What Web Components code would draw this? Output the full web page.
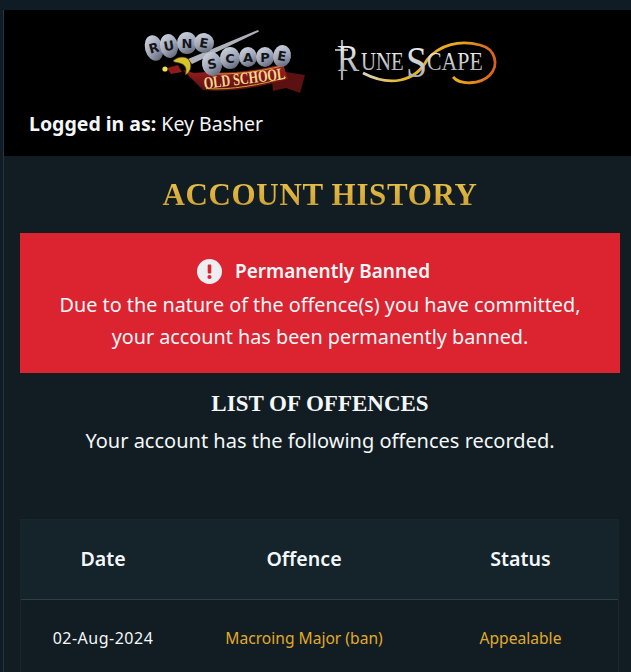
<!DOCTYPE html>
<html>
<head>
<meta charset="utf-8">
<title>Account History</title>
<style>
html, body { margin: 0; padding: 0; height: 100%; overflow: hidden; background: #121d23; }
body { font-family: "Noto Sans", sans-serif; color: #f4f7f9; }
</style>
</head>
<body>
<account-page>
  <site-header slot="header" user="Key Basher"></site-header>
  <section-title>ACCOUNT HISTORY</section-title>
  <ban-alert heading="Permanently Banned">Due to the nature of the offence(s) you have committed,<br>your account has been permanently banned.</ban-alert>
  <sub-title heading="LIST OF OFFENCES">Your account has the following offences recorded.</sub-title>
  <offence-table></offence-table>
</account-page>

<script>
class AccountPage extends HTMLElement {
  constructor() {
    super();
    this.attachShadow({mode: "open"}).innerHTML = `
      <style>
        :host { display: block; height: 672px; box-sizing: border-box; padding-top: 10px; background: #0f1c25; }
        .frame { margin-left: 3px; border-left: 1px solid #25343d; height: 662px; background: #121d23; overflow: hidden; }
        .content { padding: 0 11px 0 16px; }
      </style>
      <div class="frame">
        <slot name="header"></slot>
        <div class="content"><slot></slot></div>
      </div>`;
  }
}
customElements.define("account-page", AccountPage);

class OsrsLogo extends HTMLElement {
  constructor() {
    super();
    const stones = [
      ["R", 14, 23, 9, 13, -15], ["U", 29, 21, 9, 12, -10], ["N", 47, 18, 10, 11, 0], ["E", 64, 18, 10, 10, 10],
      ["S", 72, 39, 10, 12, -10], ["C", 90, 33, 10, 11, 0], ["A", 108, 32, 9, 10, 0], ["P", 125, 32, 9, 10, 0], ["E", 142, 31, 9, 11, 10]
    ];
    const rocks = stones.map(s => `
      <g transform="rotate(${s[5]} ${s[1]} ${s[2]})">
        <ellipse cx="${s[1]}" cy="${s[2]}" rx="${s[3]}" ry="${s[4]}" fill="url(#st)"/>
        <text x="${s[1]}" y="${s[2] + 4.5}">${s[0]}</text>
      </g>`).join("");
    this.attachShadow({mode: "open"}).innerHTML = `
      <style>:host { display: block; width: 170px; height: 70px; } svg { display: block; }</style>
      <svg width="170" height="70" viewBox="0 0 170 70">
        <defs>
          <linearGradient id="st" x1="0" y1="0" x2=".5" y2="1"><stop offset="0" stop-color="#d5dae6"/><stop offset=".6" stop-color="#a2a9ba"/><stop offset="1" stop-color="#6c7282"/></linearGradient>
          <linearGradient id="rb" x1="0" y1="0" x2="0" y2="1"><stop offset="0" stop-color="#a62022"/><stop offset="1" stop-color="#5d0f10"/></linearGradient>
        </defs>
        <path d="M146 47 L165 50 L160 68 L146 63 L133 66 L132 57Z" fill="#5b1012"/>
        <path d="M43 45 L54 48 L67 47 C92 49 120 45 143 39 L148 54 C122 62 88 68 63 65 Z" fill="url(#rb)"/>
        <path d="M67 48.5 C92 50.5 120 46.5 142 41" fill="none" stroke="#c9a33a" stroke-width="1"/>
        <path d="M66 63.5 C90 65.5 122 59.5 146 52.5" fill="none" stroke="#c9a33a" stroke-width="1"/>
        <path d="M48 34 L118 5 L119 6.5 L52 39Z" fill="#aeb2bb"/>
        <path d="M33 36 C38 31 46 31 49 35 C53 41 50 48 45 50 C47 45 46 41 42 39 C38 37 35 38 33 36Z" fill="#d9c22c" stroke="#4a3b08" stroke-width=".7"/>
        <path d="M27 43 L38 40 L42 47 L31 49Z" fill="#8f1a1c"/>
        <circle cx="25" cy="44" r="2.6" fill="#ece44a"/>
        <g font-family="'DejaVu Sans', sans-serif" font-size="13" font-weight="700" fill="#14161b" text-anchor="middle">${rocks}</g>
        <text transform="translate(105 59) rotate(-7) scale(.72 1)" font-family="'Liberation Serif', serif" font-weight="700" font-size="17" fill="#f2d98e" text-anchor="middle">OLD SCHOOL</text>
      </svg>`;
  }
}
customElements.define("osrs-logo", OsrsLogo);

class RsLogo extends HTMLElement {
  constructor() {
    super();
    this.attachShadow({mode: "open"}).innerHTML = `
      <style>:host { display: block; width: 175px; height: 60px; } svg { display: block; }</style>
      <svg width="175" height="60" viewBox="0 0 175 60">
        <defs>
          <linearGradient id="fl" gradientUnits="userSpaceOnUse" x1="30" y1="0" x2="170" y2="0">
            <stop offset="0" stop-color="#d8d8d0"/><stop offset=".3" stop-color="#e3b52a"/><stop offset=".7" stop-color="#ecaa1e"/><stop offset="1" stop-color="#d8561a"/>
          </linearGradient>
          <linearGradient id="mt" x1="0" y1="0" x2="0" y2="1"><stop offset="0" stop-color="#fff"/><stop offset="1" stop-color="#9a9ea2"/></linearGradient>
        </defs>
        <path d="M5 20 H18 M12 10 V50" stroke="#a3a6a8" stroke-width="2.2" fill="none"/>
        <path d="M33 43 C60 57 85 52 97 30 C110 14 130 10 150 15 C166 19 169 35 160 45 C150 55 130 55 123 47" fill="none" stroke="url(#fl)" stroke-width="2.8"/>
        <g font-family="'Liberation Serif', serif" fill="url(#mt)">
          <text transform="translate(7 41) scale(.9 1)" font-size="37">R</text>
          <text transform="translate(31 40) scale(.8 1)" font-size="26">UNE</text>
          <text transform="translate(76 47) scale(.86 1)" font-size="44">S</text>
          <text transform="translate(97 40) scale(.84 1)" font-size="26">CAPE</text>
        </g>
      </svg>`;
  }
}
customElements.define("rs-logo", RsLogo);

class SiteHeader extends HTMLElement {
  constructor() {
    super();
    this.attachShadow({mode: "open"});
  }
  connectedCallback() {
    this.shadowRoot.innerHTML = `
      <style>
        :host { display: block; background: #000; height: 146px; box-sizing: border-box; padding-top: 15px; }
        .logos { display: flex; justify-content: center; gap: 20px; height: 70px; padding-left: 10px; align-items: flex-start; }
        rs-logo { margin-top: 5px; }
        .user { margin: 15px 0 0 25px; font-size: 19.5px; line-height: 28px; color: #f4f7f9; }
        b { font-weight: 700; }
      </style>
      <div class="logos"><osrs-logo></osrs-logo><rs-logo></rs-logo></div>
      <div class="user"><b>Logged in as:</b> ${this.getAttribute("user")}</div>`;
  }
}
customElements.define("site-header", SiteHeader);

class SectionTitle extends HTMLElement {
  constructor() {
    super();
    this.attachShadow({mode: "open"}).innerHTML = `
      <style>
        :host { display: block; text-align: center; padding: 20px 0 19px; }
        h1 { margin: 0; font: 700 31px/38px "Liberation Serif", serif; letter-spacing: .65px;
             background: linear-gradient(#ecc64e, #c9982c); -webkit-background-clip: text; background-clip: text; color: transparent; }
      </style>
      <h1><slot></slot></h1>`;
  }
}
customElements.define("section-title", SectionTitle);

class BanAlert extends HTMLElement {
  constructor() {
    super();
    this.attachShadow({mode: "open"});
  }
  connectedCallback() {
    this.shadowRoot.innerHTML = `
      <style>
        :host { display: block; background: #dc2330; height: 140px; width: 600px; box-sizing: border-box; padding-top: 22px; text-align: center; color: #f4f7f9; font-size: 19.8px; line-height: 32px; }
        .head { display: flex; justify-content: center; align-items: center; gap: 13px; font-weight: 600; font-size: 19px; height: 32px; margin-bottom: 2px; padding-right: 13px; }
        svg { display: block; }
      </style>
      <div class="head">
        <svg width="25" height="25" viewBox="0 0 25 25"><circle cx="12.5" cy="12.5" r="12.5" fill="#eceef1"/><rect x="10.7" y="5.5" width="3.6" height="9" rx="1" fill="#dc2330"/><circle cx="12.5" cy="18" r="2.1" fill="#dc2330"/></svg>
        <span>${this.getAttribute("heading")}</span>
      </div>
      <div><slot></slot></div>`;
  }
}
customElements.define("ban-alert", BanAlert);

class SubTitle extends HTMLElement {
  constructor() {
    super();
    this.attachShadow({mode: "open"});
  }
  connectedCallback() {
    this.shadowRoot.innerHTML = `
      <style>
        :host { display: block; text-align: center; width: 600px; padding-top: 16px; }
        h2 { margin: 0; font: 700 23px/30px "Liberation Serif", serif; color: #f4f7f9; }
        p { margin: 9px 0 0; font-size: 20px; line-height: 26px; color: #f4f7f9; }
      </style>
      <h2>${this.getAttribute("heading")}</h2>
      <p><slot></slot></p>`;
  }
}
customElements.define("sub-title", SubTitle);

class OffenceTable extends HTMLElement {
  constructor() {
    super();
    this.attachShadow({mode: "open"}).innerHTML = `
      <style>
        :host { display: block; margin-top: 65px; width: 599px; border: solid #172730; border-width: 1px 1px 0; box-sizing: border-box; }
        .row { display: grid; grid-template-columns: 164px 238px 1fr; text-align: center; align-items: center; box-sizing: border-box; }
        .head { height: 80px; padding-bottom: 3px; background: #15242b; border-bottom: 1px solid #2c3e47; font-weight: 600; font-size: 19.6px; color: #f4f7f9; }
        .body { height: 78px; padding-bottom: 2px; font-size: 15.6px; color: #f4f7f9; }
        .date { font-size: 16px; letter-spacing: .5px; }
        .gold { color: #e0ab2b; }
      </style>
      <div class="row head"><div>Date</div><div>Offence</div><div>Status</div></div>
      <div class="row body"><div class="date">02-Aug-2024</div><div class="gold">Macroing Major (ban)</div><div class="gold">Appealable</div></div>`;
  }
}
customElements.define("offence-table", OffenceTable);
</script>
</body>
</html>
